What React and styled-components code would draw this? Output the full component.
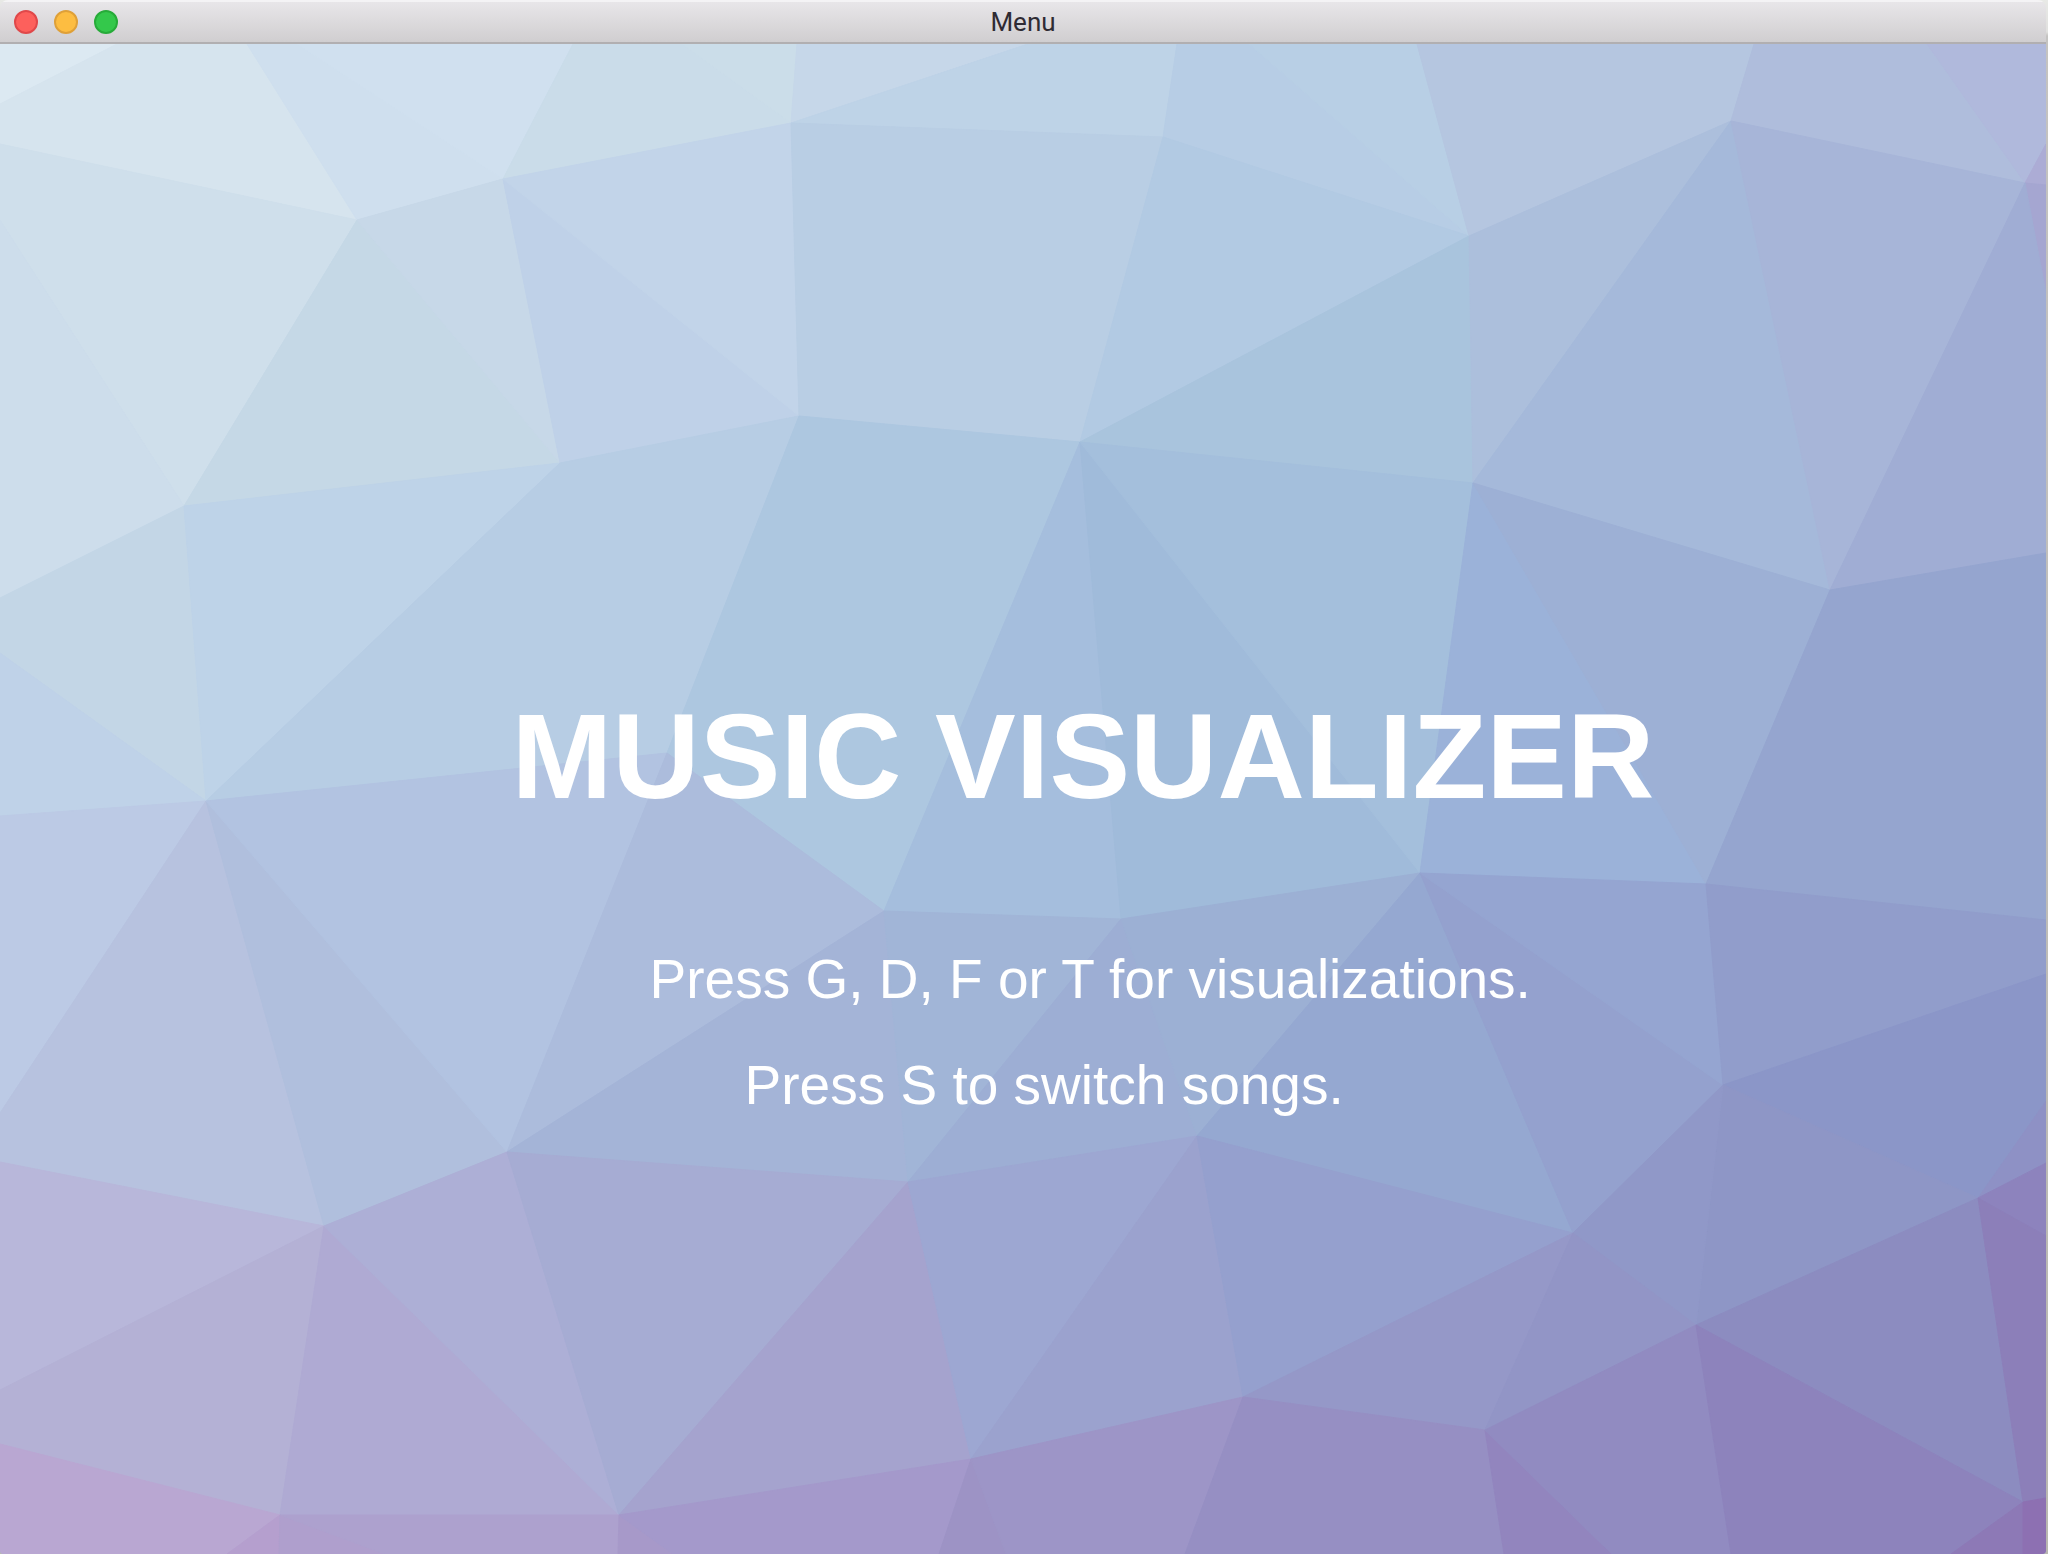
import React from "react";
import styled, { createGlobalStyle } from "styled-components";

const GlobalStyle = createGlobalStyle`
  * { box-sizing: border-box; }
  body { margin: 0; }
`;

/* The two-pixel strip of desktop that shows on the right of the window. */
const Desktop = styled.div`
  display: flex;
  flex-direction: column;
  min-height: 100vh;
  padding-right: 2px;
  background: linear-gradient(#e8e9e6 0, #e0e0de 32px, #c4c3c1 36px, #b9b7b0 100%);
`;

const Window = styled.main`
  display: flex;
  flex: 1;
  flex-direction: column;
  overflow: hidden;
  border-radius: 8px 8px 4px 4px;
`;

const TitleBar = styled.header`
  display: grid;
  grid-template-columns: 1fr auto 1fr;
  align-items: center;
  height: 44px;
  padding: 0 14px;
  border-top: 2px solid #f4f3f5;
  border-bottom: 2px solid #b1afb1;
  background: linear-gradient(#e8e6e9, #d0ced0);
`;

const Controls = styled.div`
  display: flex;
  gap: 16px;
`;

const Light = styled.button`
  width: 24px;
  height: 24px;
  padding: 0;
  border: 2px solid ${(p) => p.$ring};
  border-radius: 50%;
  background: ${(p) => p.$fill};
`;

const WindowTitle = styled.span`
  color: #2f2b33;
  font: 400 26px/32px Roboto, "Liberation Sans", sans-serif;
`;

const Stage = styled.section`
  display: grid;
  flex: 1;
  background: #a4b8da;
`;

const Backdrop = styled.svg`
  grid-area: 1 / 1;
  width: 100%;
  height: 100%;
  min-height: 0;
  contain: size;
`;

const Content = styled.div`
  display: flex;
  grid-area: 1 / 1;
  justify-content: center;
  padding: 652px 0 64px 120px;
  z-index: 1;
`;

const Copy = styled.div`
  display: flex;
  flex-direction: column;
  color: #fff;
  font-family: "Liberation Sans", Arial, sans-serif;
  white-space: nowrap;
`;

const Heading = styled.h1`
  margin: 0 0 131px;
  font-size: 121px;
  font-weight: 700;
  line-height: 120px;
`;

const Hint = styled.p`
  margin: 0 0 42px;
  padding-left: ${(p) => p.$indent}px;
  font-size: 55px;
  line-height: 64px;
`;

const LIGHTS = [
  ["Close", "#fd605c", "#e0484a"],
  ["Minimize", "#fdbd41", "#dfa038"],
  ["Zoom", "#34c84b", "#27ab39"],
];

/* Facets of the low-poly backdrop, painted in order. */
const FACETS = [
  ["#dce9f2", "0,44 117,44 0,104"],
  ["#d6e4ee", "117,44 247,44 357,220 0,144 0,104"],
  ["#cfdfee", "247,44 297,44 503,179 357,220"],
  ["#d0e0ef", "297,44 573,44 503,179"],
  ["#cadce9", "573,44 682,44 791,123 503,179"],
  ["#cbdde9", "682,44 797,44 791,123"],
  ["#c6d7e9", "797,44 1028,44 791,123"],
  ["#bed3e7", "1028,44 1177,44 1163,137 791,123"],
  ["#b7cde5", "1177,44 1249,44 1469,236 1163,137"],
  ["#b8cfe5", "1249,44 1417,44 1469,236"],
  ["#b5c6e0", "1417,44 1754,44 1731,121 1469,236"],
  ["#afbddc", "1754,44 1927,44 2025,183 1731,121"],
  ["#b0b9dc", "1927,44 2046,44 2046,144 2025,183"],
  ["#acacd5", "2046,144 2046,185 2025,183"],
  ["#a5a6d1", "2025,183 2046,185 2046,293"],
  ["#cfdfeb", "0,144 357,220 184,506 0,220"],
  ["#cdddeb", "0,220 184,506 0,598"],
  ["#c5d8e6", "357,220 560,463 184,506"],
  ["#c7d8e8", "357,220 503,179 560,463"],
  ["#bfd1e8", "503,179 799,416 560,463"],
  ["#c2d4e9", "503,179 791,123 799,416"],
  ["#b9cee4", "791,123 1163,137 1080,442 799,416"],
  ["#b2cae3", "1163,137 1469,236 1080,442"],
  ["#a9c4dd", "1469,236 1473,483 1080,442"],
  ["#acbfdc", "1469,236 1731,121 1473,483"],
  ["#a5b9da", "1731,121 1830,590 1473,483"],
  ["#a7b5d8", "1731,121 2025,183 1830,590"],
  ["#a0add4", "2025,183 2046,293 2046,553 1830,590"],
  ["#c3d6e6", "0,598 184,506 206,801 0,653"],
  ["#bfd2e8", "0,653 206,801 0,816"],
  ["#bed3e8", "184,506 560,463 206,801"],
  ["#b7cde4", "560,463 799,416 667,753 206,801"],
  ["#adc7e0", "799,416 1080,442 884,911 667,753"],
  ["#a5bedd", "1080,442 1121,919 884,911"],
  ["#a0bbda", "1080,442 1420,873 1121,919"],
  ["#a4bfdc", "1080,442 1473,483 1420,873"],
  ["#9bb2d9", "1473,483 1706,884 1420,873"],
  ["#9db0d5", "1473,483 1830,590 1706,884"],
  ["#95a5cf", "1830,590 2046,553 2046,920 1706,884"],
  ["#bccae5", "0,816 206,801 0,1113"],
  ["#b7c2df", "206,801 324,1226 0,1162 0,1113"],
  ["#b0bfdd", "206,801 507,1152 324,1226"],
  ["#b2c3e1", "206,801 667,753 507,1152"],
  ["#acbcdc", "667,753 884,911 507,1152"],
  ["#a4b4d7", "884,911 908,1182 507,1152"],
  ["#a1b5d7", "884,911 1121,919 908,1182"],
  ["#9daed4", "1121,919 1197,1136 908,1182"],
  ["#9cb0d4", "1121,919 1420,873 1197,1136"],
  ["#95a8d1", "1420,873 1573,1233 1197,1136"],
  ["#94a1ce", "1420,873 1723,1085 1573,1233"],
  ["#95a5d1", "1420,873 1706,884 1723,1085"],
  ["#919dcb", "1706,884 2046,920 2046,974 1723,1085"],
  ["#8b96c8", "1723,1085 2046,974 2046,1101 1978,1198"],
  ["#8e91c5", "2046,1101 2046,1163 1978,1198"],
  ["#8e96c6", "1723,1085 1978,1198 1696,1325"],
  ["#9098c8", "1723,1085 1696,1325 1573,1233"],
  ["#b8b7da", "0,1162 324,1226 0,1390"],
  ["#b4b1d5", "324,1226 280,1515 0,1444 0,1390"],
  ["#afaad3", "324,1226 619,1515 280,1515"],
  ["#adafd6", "324,1226 507,1152 619,1515"],
  ["#a6acd3", "507,1152 908,1182 619,1515"],
  ["#a5a3ce", "908,1182 971,1459 619,1515"],
  ["#9da7d2", "908,1182 1197,1136 971,1459"],
  ["#9ba2ce", "1197,1136 1243,1397 971,1459"],
  ["#95a0ce", "1197,1136 1573,1233 1243,1397"],
  ["#9598c8", "1573,1233 1485,1430 1243,1397"],
  ["#9295c6", "1573,1233 1696,1325 1485,1430"],
  ["#8c8cc0", "1696,1325 1978,1198 2023,1502"],
  ["#8d83bd", "1978,1198 2046,1163 2046,1236"],
  ["#8c7fb9", "1978,1198 2046,1236 2046,1498 2023,1502"],
  ["#b9a7d2", "0,1444 280,1515 227,1554 0,1554"],
  ["#b59fce", "280,1515 279,1554 227,1554"],
  ["#af9fcd", "280,1515 385,1554 279,1554"],
  ["#ada1ce", "280,1515 619,1515 618,1554 385,1554"],
  ["#a799c9", "619,1515 673,1554 618,1554"],
  ["#a499cb", "619,1515 971,1459 939,1554 673,1554"],
  ["#9d93c5", "971,1459 1006,1554 939,1554"],
  ["#9d95c7", "971,1459 1243,1397 1185,1554 1006,1554"],
  ["#968fc3", "1243,1397 1485,1430 1504,1554 1185,1554"],
  ["#9285be", "1485,1430 1612,1554 1504,1554"],
  ["#918bc1", "1485,1430 1696,1325 1731,1554 1612,1554"],
  ["#8d83bc", "1696,1325 2023,1502 1951,1554 1731,1554"],
  ["#8d79b6", "2023,1502 2023,1554 1951,1554"],
  ["#8d70b2", "2023,1502 2046,1498 2046,1554 2023,1554"],
];

export default function App() {
  return (
    <>
      <GlobalStyle />
      <Desktop>
        <Window>
          <TitleBar>
            <Controls>
              {LIGHTS.map(([label, fill, ring]) => (
                <Light key={label} type="button" aria-label={label} $fill={fill} $ring={ring} />
              ))}
            </Controls>
            <WindowTitle>Menu</WindowTitle>
          </TitleBar>
          <Stage>
            <Backdrop viewBox="0 44 2046 1510" preserveAspectRatio="none" aria-hidden="true">
              {FACETS.map(([color, points]) => (
                <polygon key={points} points={points} fill={color} stroke={color} strokeWidth="1" />
              ))}
            </Backdrop>
            <Content>
              <Copy>
                <Heading>MUSIC VISUALIZER</Heading>
                <Hint $indent={138}>Press G, D, F or T for visualizations.</Hint>
                <Hint $indent={233}>Press S to switch songs.</Hint>
              </Copy>
            </Content>
          </Stage>
        </Window>
      </Desktop>
    </>
  );
}
